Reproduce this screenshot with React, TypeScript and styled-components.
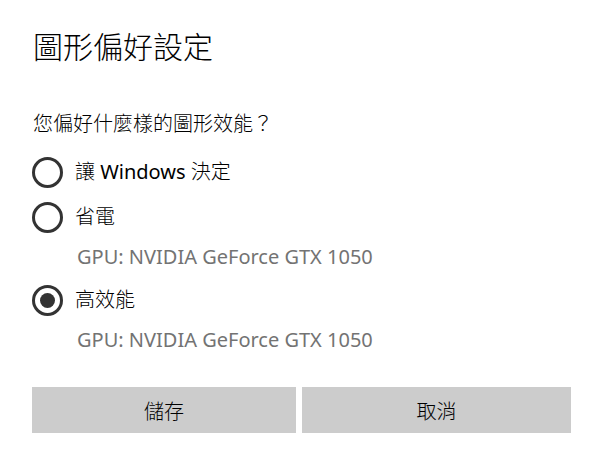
import React from "react";
import styled, { createGlobalStyle } from "styled-components";

const Global = createGlobalStyle`
  html, body { margin: 0; padding: 0; background: #ffffff; }
  body { font-family: "Noto Sans", "Noto Sans CJK TC", sans-serif; color: #000; }
`;

const Page = styled.div`
  width: 603px;
  height: 464px;
  box-sizing: border-box;
  padding: 25px 32px 0 32px;
  display: flex;
  flex-direction: column;
`;

const Title = styled.h1`
  margin: 0 0 0 1px;
  height: 40px;
  line-height: 40px;
  font-size: 30px;
  font-weight: 300;
  font-family: "Noto Sans CJK TC", sans-serif;
`;

const Question = styled.p`
  margin: 43px 0 0 1px;
  height: 30px;
  line-height: 30px;
  font-size: 20px;
  font-weight: 300;
  font-family: "Noto Sans CJK TC", sans-serif;
`;

const Options = styled.div`
  margin-top: 13px;
  display: flex;
  flex-direction: column;
  gap: 3px;
`;

const OptionGroup = styled.div`
  display: flex;
  flex-direction: column;
`;

const OptionRow = styled.label`
  height: 42px;
  display: flex;
  align-items: center;
  gap: 12px;
  cursor: pointer;
`;

const Radio = styled.span<{ $checked?: boolean }>`
  box-sizing: border-box;
  width: 31px;
  height: 31px;
  border-radius: 50%;
  border: 3px solid #333333;
  display: flex;
  align-items: center;
  justify-content: center;
  flex: none;
  &::after {
    content: "";
    display: ${(p) => (p.$checked ? "block" : "none")};
    width: 15px;
    height: 15px;
    border-radius: 50%;
    background: #333333;
  }
`;

const OptionLabel = styled.span`
  font-size: 20px;
  line-height: 30px;
  font-weight: 300;
  font-family: "Noto Sans", "Noto Sans CJK TC", sans-serif;
`;

const Latin = styled.span`
  font-weight: 400;
`;

const Description = styled.div`
  height: 38px;
  line-height: 38px;
  padding-left: 45px;
  font-size: 20px;
  font-weight: 400;
  color: #737373;
  font-family: "Noto Sans", "Noto Sans CJK TC", sans-serif;
`;

const Buttons = styled.div`
  margin-top: 28px;
  display: grid;
  grid-template-columns: 264px 269px;
  gap: 6px;
`;

const Button = styled.button`
  height: 46px;
  border: none;
  margin: 0;
  background: #cccccc;
  font-size: 20px;
  font-weight: 300;
  font-family: "Noto Sans CJK TC", sans-serif;
  color: #000;
  cursor: pointer;
`;

const options = [
  {
    key: "auto",
    label: (
      <>
        讓 <Latin>Windows</Latin> 決定
      </>
    ),
    desc: null as string | null,
    checked: false,
  },
  { key: "save", label: <>省電</>, desc: "GPU: NVIDIA GeForce GTX 1050", checked: false },
  { key: "perf", label: <>高效能</>, desc: "GPU: NVIDIA GeForce GTX 1050", checked: true },
];

export default function App() {
  return (
    <>
      <Global />
      <Page>
        <Title>圖形偏好設定</Title>
        <Question>您偏好什麼樣的圖形效能？</Question>
        <Options>
          {options.map((o) => (
            <OptionGroup key={o.key}>
              <OptionRow>
                <Radio $checked={o.checked} />
                <OptionLabel>{o.label}</OptionLabel>
              </OptionRow>
              {o.desc && <Description>{o.desc}</Description>}
            </OptionGroup>
          ))}
        </Options>
        <Buttons>
          <Button>儲存</Button>
          <Button>取消</Button>
        </Buttons>
      </Page>
    </>
  );
}
